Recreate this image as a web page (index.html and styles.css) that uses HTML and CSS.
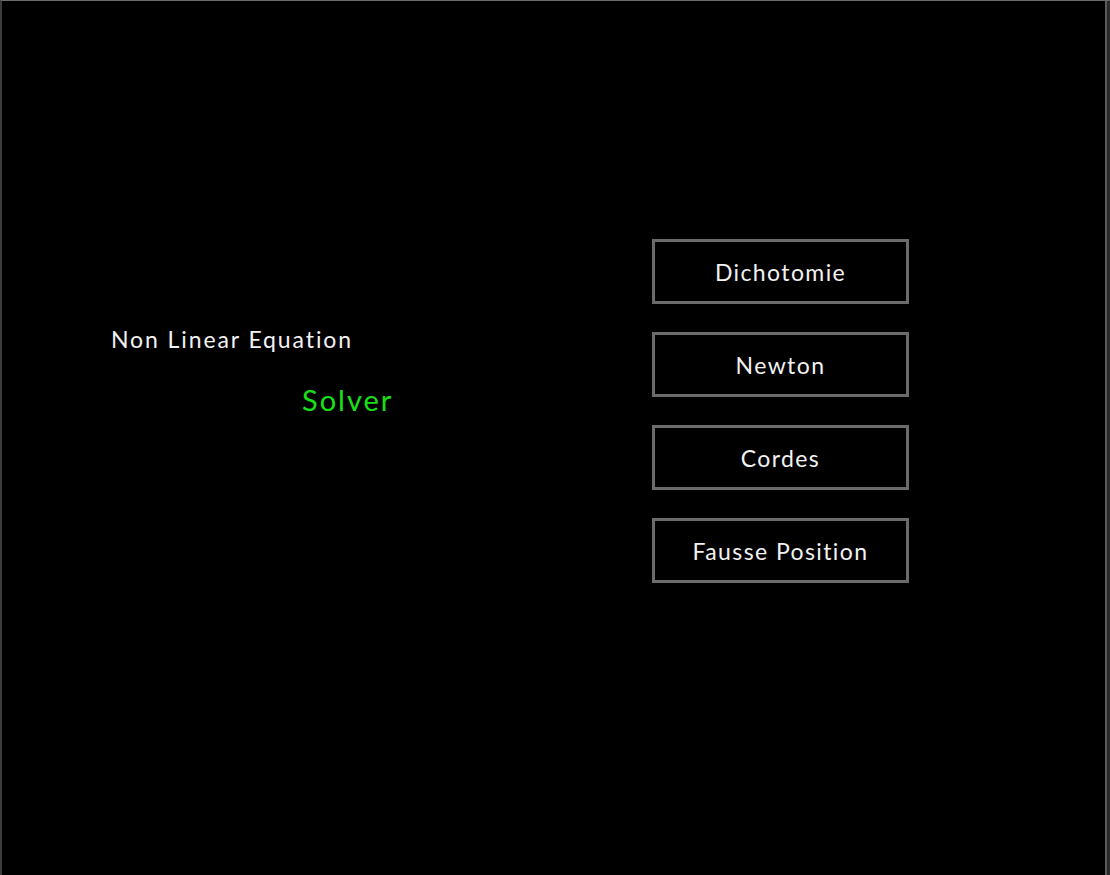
FILE: index.html
```html
<!DOCTYPE html>
<html>
<head>
<meta charset="utf-8">
<link rel="stylesheet" href="styles.css">
</head>
<body>
<div class="window">
  <main class="app">
    <section class="intro">
      <h1 class="title">Non Linear Equation</h1>
      <p class="subtitle">Solver</p>
    </section>
    <nav class="methods">
      <button class="method">Dichotomie</button>
      <button class="method">Newton</button>
      <button class="method">Cordes</button>
      <button class="method">Fausse Position</button>
    </nav>
  </main>
  <div class="scrollbar"></div>
</div>
</body>
</html>
```
FILE: styles.css
```css
html, body {
  margin: 0;
  padding: 0;
  background: #000;
  height: 100%;
}
body {
  font-family: "Lato", "Open Sans", sans-serif;
  color: #f2f2f2;
}
.window {
  display: flex;
  height: 875px;
  box-sizing: border-box;
  border-top: 1px solid #6a6a6a;
  border-left: 2px solid #3c3c3c;
  background: #000;
}
.app {
  flex: 1;
  display: flex;
  padding-top: 238px;
}
.intro {
  flex: 0 0 650px;
  box-sizing: border-box;
  padding-left: 109px;
  padding-top: 85px;
}
.title {
  margin: 0;
  font-size: 23px;
  font-weight: 400;
  letter-spacing: 1.9px;
  line-height: 30px;
}
.subtitle {
  margin: 28px 0 0 191px;
  color: #18e018;
  font-size: 29px;
  letter-spacing: 2px;
  line-height: 36px;
}
.methods {
  display: flex;
  flex-direction: column;
  gap: 28px;
}
.method {
  width: 257px;
  height: 65px;
  box-sizing: border-box;
  background: #000;
  border: 3px solid #6b6b6b;
  color: #f2f2f2;
  font-family: inherit;
  font-size: 23px;
  letter-spacing: 1.4px;
  padding: 0;
}
.scrollbar {
  width: 5px;
  border-left: 2px solid #5a5a5a;
  background: #2a2a2a;
  box-sizing: border-box;
}
```
